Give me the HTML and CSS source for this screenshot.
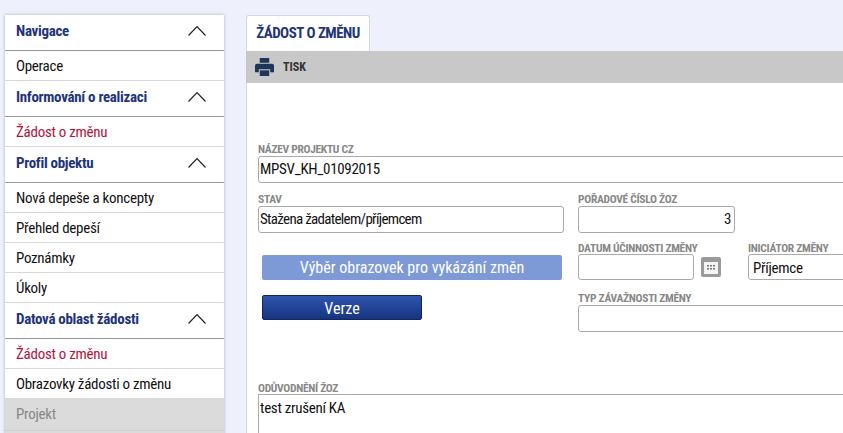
FILE: index.html
```html
<!DOCTYPE html>
<html lang="en">
  <head>
    <meta charset="UTF-8" />
    <meta name="viewport" content="width=device-width, initial-scale=1.0" />
    <title>Žádost o změnu</title>
    <link rel="stylesheet" href="styles.css">
  </head>
  <body>
    <div id="container">
      <nav class="sidebar">
        <div class="nav-head"><span>Navigace</span><svg class="chev" viewBox="0 0 20 12"><path d="M1.5 10.5 10 1.500l8.500 9"/></svg></div>
        <a class="nav-item">Operace</a>
        <div class="nav-head"><span>Informování o realizaci</span><svg class="chev" viewBox="0 0 20 12"><path d="M1.5 10.5 10 1.500l8.500 9"/></svg></div>
        <a class="nav-item active">Žádost o změnu</a>
        <div class="nav-head"><span>Profil objektu</span><svg class="chev" viewBox="0 0 20 12"><path d="M1.5 10.5 10 1.500l8.500 9"/></svg></div>
        <a class="nav-item">Nová depeše a koncepty</a>
        <a class="nav-item">Přehled depeší</a>
        <a class="nav-item">Poznámky</a>
        <a class="nav-item">Úkoly</a>
        <div class="nav-head"><span>Datová oblast žádosti</span><svg class="chev" viewBox="0 0 20 12"><path d="M1.5 10.5 10 1.500l8.500 9"/></svg></div>
        <a class="nav-item active">Žádost o změnu</a>
        <a class="nav-item">Obrazovky žádosti o změnu</a>
        <a class="nav-item disabled">Projekt</a>
      </nav>

      <main class="content">
        <div class="tab">ŽÁDOST O ZMĚNU</div>
        <div class="toolbar">
          <svg class="print" viewBox="0 0 20 19">
            <path d="M5 0h10v5H5z"/>
            <path d="M2 6h16a2 2 0 0 1 2 2v7h-4v-3H4v3H0V8a2 2 0 0 1 2-2z"/>
            <path d="M5 13h10v6H5z"/>
          </svg>
          <span>TISK</span>
        </div>
        <form class="panel">
          <div class="field">
            <label>NÁZEV PROJEKTU CZ</label>
            <div class="input">MPSV_KH_01092015</div>
          </div>
          <div class="columns">
            <div class="left">
              <div class="field">
                <label>STAV</label>
                <div class="input tight">Stažena žadatelem/příjemcem</div>
              </div>
              <button type="button" class="btn light">Výběr obrazovek pro vykázání změn</button>
              <button type="button" class="btn dark">Verze</button>
            </div>
            <div class="right">
              <div class="field short">
                <label>POŘADOVÉ ČÍSLO ŽOZ</label>
                <div class="input num">3</div>
              </div>
              <div class="row">
                <div class="field date">
                  <label>DATUM ÚČINNOSTI ZMĚNY</label>
                  <div class="input small"></div>
                </div>
                <svg class="cal" viewBox="0 0 20 20">
                  <rect width="20" height="20" rx="2" fill="#9a9a9a"/>
                  <rect x="3" y="5" width="14" height="12" fill="#f4f4f4"/>
                  <path d="M6 8h2v1.500H6zM9 8h2v1.500H9zM12 8h2v1.500h-2zM6 11h2v1.500H6zM9 11h2v1.500H9zM12 11h2v1.500h-2z" fill="#777"/>
                </svg>
                <div class="field grow">
                  <label>INICIÁTOR ZMĚNY</label>
                  <div class="input small">Příjemce</div>
                </div>
              </div>
              <div class="field typ">
                <label>TYP ZÁVAŽNOSTI ZMĚNY</label>
                <div class="input"></div>
              </div>
            </div>
          </div>
          <div class="field reason">
            <label>ODŮVODNĚNÍ ŽOZ</label>
            <div class="input area">test zrušení KA</div>
          </div>
        </form>
      </main>
    </div>
  </body>
</html>
```

FILE: styles.css
```css
html, body {
  height: 100%;
  margin: 0;
  overflow: hidden;
}
body {
  background-color: #eef1fb;
  font-family: "Roboto", "Liberation Sans", sans-serif;
  font-stretch: condensed;
  font-size: 15px;
  color: #111;
}
#container {
  display: flex;
  align-items: flex-start;
  width: 1100px;
  padding: 15px 0 0 5px;
}

/* left menu */
.sidebar {
  width: 219px;
  height: 440px;
  flex-shrink: 0;
  background-color: #dbdbdb;
  box-shadow: 0 0 3px #aab;
  display: flex;
  flex-direction: column;
}
.nav-head {
  height: 36px;
  flex-shrink: 0;
  box-sizing: border-box;
  background-color: white;
  border-bottom: 1px solid #999;
  display: flex;
  align-items: center;
  justify-content: space-between;
  padding: 0 17px 3px 11px;
  color: #1f3578;
  font-weight: bold;
  letter-spacing: -0.3px;
}
.chev {
  width: 20px;
  height: 12px;
  fill: none;
  stroke: #222;
  stroke-width: 1.200;
}
.nav-item {
  height: 30px;
  flex-shrink: 0;
  box-sizing: border-box;
  background-color: white;
  border-bottom: 1px solid #d8d8d8;
  padding: 0 11px;
  line-height: 30px;
  letter-spacing: -0.28px;
}
.nav-item.active {
  color: #b5123a;
}
.nav-item.disabled {
  height: 32px;
  background-color: #dbdbdb;
  border-bottom-color: #d0d0d0;
  color: #888;
}

/* main part */
.content {
  margin-left: 21px;
  flex-grow: 1;
}
.tab {
  width: 124px;
  height: 36px;
  box-sizing: border-box;
  margin-left: 1px;
  background-color: white;
  border: 1px solid #d5d8e2;
  border-bottom: none;
  border-radius: 3px 3px 0 0;
  line-height: 35px;
  text-align: center;
  color: #1f3578;
  font-weight: bold;
  letter-spacing: -0.5px;
}
.toolbar {
  height: 32px;
  margin-left: 1px;
  background-color: #c8c8c8;
  display: flex;
  align-items: center;
  gap: 9px;
  padding-left: 9px;
  font-size: 12px;
  font-weight: bold;
  color: #333;
}
.print {
  width: 19px;
  height: 18px;
  fill: #1d3557;
}
.panel {
  margin-left: 1px;
  background-color: white;
  height: 350px;
  padding: 58px 0 0 11px;
  border-left: 1px solid #d5d8e2;
}
.field label {
  display: block;
  height: 15px;
  line-height: 17px;
  font-size: 11.500px;
  font-weight: bold;
  color: #888;
  letter-spacing: -0.3px;
  white-space: nowrap;
}
.input {
  height: 27px;
  box-sizing: border-box;
  border: 1px solid #aaa;
  border-radius: 3px;
  padding: 0 2px 0 1px;
  line-height: 25px;
  background-color: white;
  letter-spacing: -0.3px;
}
.tight {
  letter-spacing: -0.7px;
}
.columns {
  display: flex;
  gap: 14px;
  margin-top: 8px;
}
.left {
  width: 306px;
  flex-shrink: 0;
}
.right {
  flex-grow: 1;
}
.btn {
  display: block;
  margin-left: 4px;
  height: 25px;
  border: none;
  border-radius: 2px;
  color: white;
  font-family: inherit;
  font-stretch: condensed;
  font-size: 16px;
}
.btn.light {
  width: 300px;
  margin-top: 22px;
  background-color: #7e9ad6;
}
.btn.dark {
  width: 160px;
  margin-top: 15px;
  padding-top: 3px;
  background: linear-gradient(#2f55ae, #16347f);
  border: 1px solid #12275f;
}
.short {
  width: 157px;
}
.num {
  text-align: right;
  padding-right: 3px;
}
.row {
  display: flex;
  align-items: flex-end;
  margin-top: 7px;
}
.row label {
  height: 14px;
}
.date {
  width: 116px;
}
.small {
  height: 26px;
  padding-left: 4px;
  line-height: 27px;
}
.cal {
  width: 20px;
  height: 20px;
  margin: 0 27px 3px 7px;
}
.grow {
  flex-grow: 1;
}
.typ {
  margin-top: 10px;
}
.reason {
  margin-top: 47px;
}
.reason label {
  line-height: 19px;
}
.area {
  height: 60px;
  border-radius: 0;
  line-height: 27px;
}
```
